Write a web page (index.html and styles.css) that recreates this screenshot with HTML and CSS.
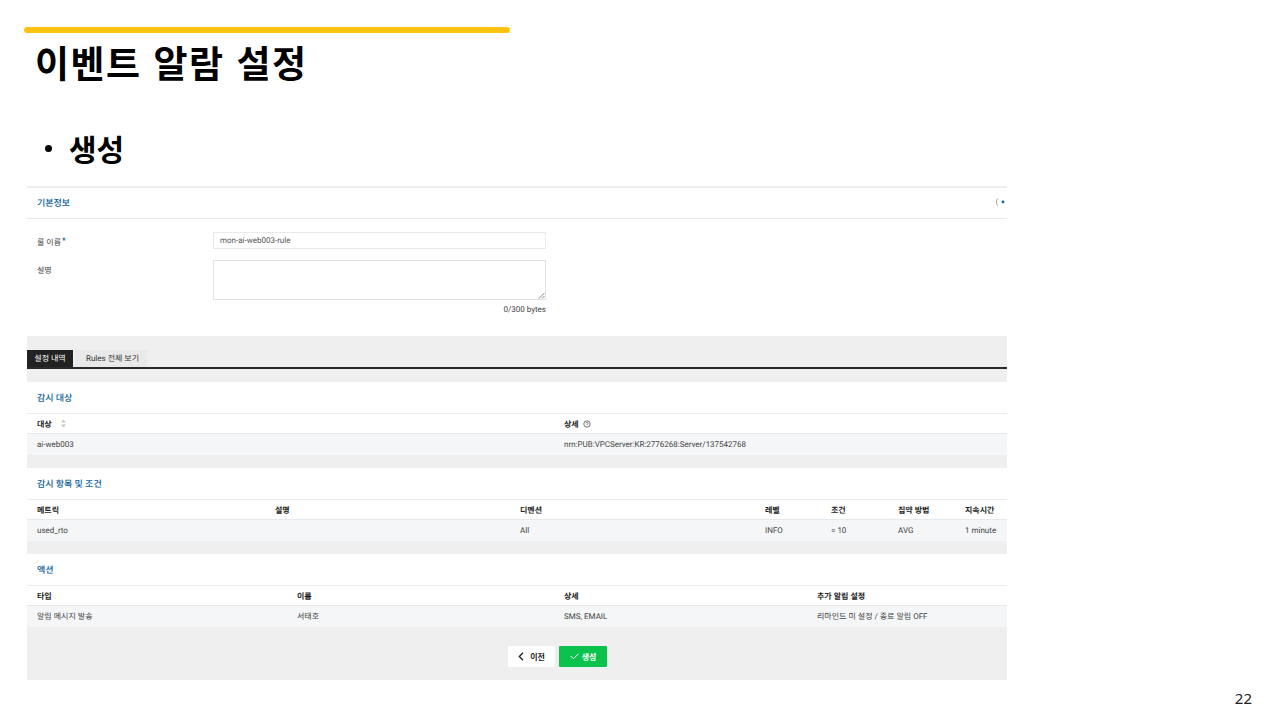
FILE: index.html

```html
<!DOCTYPE html>
<html lang="ko">
<head>
<meta charset="UTF-8" />
<title>이벤트 알람 설정</title>
<link rel="stylesheet" href="styles.css">
</head>
<body>
<div class="slide">
  <div class="accent-bar"></div>
  <h1 class="slide-title">이벤트 알람 설정</h1>
  <ul class="bullets">
    <li>생성</li>
  </ul>

  <main class="console">
    <section class="basic-info">
      <div class="basic-head">
        <h2 class="section-title">기본정보</h2>
        <svg class="spinner" width="10" height="10" viewBox="0 0 10 10" aria-hidden="true">
          <path d="M2.6 1.5 C1 3.6 1 6.4 2.6 8.5" fill="none" stroke="#9aa5ad" stroke-width="1" />
          <circle cx="8" cy="5" r="1.4" fill="#0a6aa1" />
        </svg>
      </div>
      <div class="form">
        <div class="form-row">
          <label class="form-label">룰 이름<span class="required">*</span></label>
          <div class="text-input">mon-ai-web003-rule</div>
        </div>
        <div class="form-row form-row-desc">
          <label class="form-label">설명</label>
          <div class="text-area">
            <svg class="resize-grip" width="7" height="7" viewBox="0 0 7 7" aria-hidden="true">
              <path d="M1 6.5 L6.5 1 M4 6.5 L6.5 4" stroke="#666" stroke-width="0.8" />
            </svg>
          </div>
        </div>
        <div class="byte-count">0/300 bytes</div>
      </div>
    </section>

    <div class="tabs">
      <div class="tab tab-active">설정 내역</div>
      <div class="tab tab-rules">Rules 전체 보기</div>
    </div>

    <section class="card">
      <h2 class="section-title card-title">감시 대상</h2>
      <div class="grid-row grid-head cols-target">
        <div>대상
          <svg class="sort-icon" width="7" height="9" viewBox="0 0 7 9" aria-hidden="true">
            <path d="M3.5 0.5 L6 3.4 H1 Z M3.5 8.5 L6 5.6 H1 Z" fill="#c4c8cc" />
          </svg>
        </div>
        <div>상세
          <svg class="help-icon" width="8" height="8" viewBox="0 0 8 8" aria-hidden="true">
            <circle cx="4" cy="4" r="3.2" fill="none" stroke="#555" stroke-width="0.8" />
            <path d="M3 3.2 A1 1 0 1 1 4 4.3 V4.9 M4 5.6 V6.2" fill="none" stroke="#555" stroke-width="0.7" />
          </svg>
        </div>
      </div>
      <div class="grid-row grid-body cols-target">
        <div>ai-web003</div>
        <div>nrn:PUB:VPCServer:KR:2776268:Server/137542768</div>
      </div>
    </section>

    <section class="card">
      <h2 class="section-title card-title">감시 항목 및 조건</h2>
      <div class="grid-row grid-head cols-metric">
        <div>메트릭</div><div>설명</div><div>디멘션</div><div>레벨</div><div>조건</div><div>집약 방법</div><div>지속시간</div>
      </div>
      <div class="grid-row grid-body cols-metric">
        <div>used_rto</div><div></div><div>All</div><div>INFO</div><div>= 10</div><div>AVG</div><div>1 minute</div>
      </div>
    </section>

    <section class="card">
      <h2 class="section-title card-title">액션</h2>
      <div class="grid-row grid-head cols-action">
        <div>타입</div><div>이름</div><div>상세</div><div>추가 알림 설정</div>
      </div>
      <div class="grid-row grid-body cols-action">
        <div>알림 메시지 발송</div><div>서태호</div><div>SMS, EMAIL</div><div>리마인드 미 설정 / 종료 알림 OFF</div>
      </div>
    </section>

    <div class="actions">
      <button class="btn btn-prev" type="button">
        <svg width="6" height="9" viewBox="0 0 6 9" aria-hidden="true">
          <path d="M5 0.8 L1.3 4.5 L5 8.2" fill="none" stroke="#222" stroke-width="1.3" />
        </svg>
        이전
      </button>
      <button class="btn btn-create" type="button">
        <svg width="9" height="7" viewBox="0 0 9 7" aria-hidden="true">
          <path d="M0.7 3 L3.4 5.8 L8.4 0.8" fill="none" stroke="#fff" stroke-width="1" />
        </svg>
        생성
      </button>
    </div>
  </main>

  <footer class="page-number">22</footer>
</div>
</body>
</html>
```

FILE: styles.css

```css
/* Reset and base */
* {
  box-sizing: border-box;
  margin: 0;
  padding: 0;
}
body {
  background: #fff;
  color: #000;
  font-family: Roboto, "Noto Sans CJK KR", sans-serif;
}
.slide {
  width: 1280px;
  height: 720px;
  padding-top: 27px;
  display: flex;
  flex-direction: column;
  overflow: hidden;
}

/* Slide heading */
.accent-bar {
  width: 486px;
  height: 6px;
  margin-left: 24px;
  background: #ffc20e;
  border-radius: 3px;
}
.slide-title {
  height: 60px;
  margin-left: 35px;
  font-family: "Noto Sans CJK KR", sans-serif;
  font-size: 37px;
  font-weight: 700;
  line-height: 58px;
  letter-spacing: 1.5px;
}
.bullets {
  height: 93px;
  padding-top: 34px;
  margin-left: 45px;
  list-style: none;
}
.bullets li {
  display: flex;
  align-items: center;
  gap: 17px;
  font-family: "Noto Sans CJK KR", sans-serif;
  font-size: 30px;
  font-weight: 700;
  line-height: 42px;
}
.bullets li::before {
  content: "";
  width: 7px;
  height: 7px;
  border-radius: 50%;
  background: #000;
}

/* Console panel */
.console {
  width: 980px;
  margin-left: 27px;
  background: #efefef;
  font-size: 8px;
  color: #333;
  text-rendering: geometricPrecision;
}
.section-title {
  font-size: 9px;
  font-weight: 500;
  color: #0a6096;
}
.basic-info {
  height: 150px;
  background: #fff;
  border-top: 2px solid #eee;
}
.basic-head {
  height: 31px;
  padding: 0 2px 2px 10px;
  display: flex;
  align-items: center;
  justify-content: space-between;
  border-bottom: 1px solid #e8e8e8;
}
.form {
  padding-top: 13px;
}
.form-row {
  display: flex;
}
.form-row-desc {
  margin-top: 11px;
}
.form-row-desc .form-label {
  padding-top: 5px;
}
.form-label {
  width: 186px;
  padding: 4px 0 0 10px;
  font-size: 8px;
  color: #444;
}
.required {
  color: #0a5c8f;
  font-size: 8px;
  font-weight: 700;
  vertical-align: 2px;
  margin-left: 1px;
}
.text-input {
  width: 333px;
  height: 17px;
  padding-left: 6px;
  border: 1px solid #e9e9e9;
  font-size: 8px;
  line-height: 15px;
  color: #555;
}
.text-area {
  width: 333px;
  height: 40px;
  border: 1px solid #e3e3e3;
  display: flex;
  align-items: flex-end;
  justify-content: flex-end;
}
.resize-grip {
  display: block;
}
.byte-count {
  width: 519px;
  margin-top: 5px;
  text-align: right;
  font-size: 8px;
  color: #444;
}

/* Tabs */
.tabs {
  height: 33px;
  margin-bottom: 13px;
  padding-top: 14px;
  display: flex;
  gap: 2px;
  border-bottom: 2px solid #2b2b2b;
}
.tab {
  height: 17px;
  background: #e9e9e9;
  font-size: 8px;
  line-height: 17px;
  color: #333;
}
.tab-rules {
  width: 72px;
  padding-left: 11px;
}
.tab-active {
  width: 46px;
  background: #222;
  color: #fff;
  text-align: center;
}

/* Detail cards */
.card {
  margin-bottom: 13px;
  background: #fff;
}
.card-title {
  height: 32px;
  padding-left: 10px;
  padding-top: 2px;
  line-height: 30px;
  border-bottom: 1px solid #ebebeb;
}
.grid-row {
  height: 21px;
  padding-left: 10px;
  display: grid;
  align-items: center;
}
.grid-head {
  height: 20px;
  padding-top: 1px;
  border-bottom: 1px solid #e6e9eb;
  font-weight: 700;
  color: #222;
}
.grid-body {
  background: #f4f6f7;
  color: #444;
}
.cols-target {
  grid-template-columns: 527px 1fr;
}
.cols-metric {
  grid-template-columns: 238px 245px 245px 66px 67px 67px 1fr;
}
.cols-action {
  grid-template-columns: 260px 267px 253px 1fr;
}
.sort-icon {
  margin-left: 6px;
  vertical-align: -1px;
}
.help-icon {
  margin-left: 2px;
  vertical-align: -1px;
}

/* Footer buttons */
.actions {
  height: 53px;
  margin-top: -13px;
  padding: 19px 0 0 81px;
  display: flex;
  justify-content: center;
  gap: 4px;
}
.btn {
  height: 21px;
  border: none;
  border-radius: 1px;
  font-family: inherit;
  font-size: 8px;
  font-weight: 700;
  display: flex;
  align-items: center;
  justify-content: center;
  gap: 6px;
}
.btn-prev {
  width: 47px;
  background: #fff;
  color: #222;
}
.btn-create {
  width: 48px;
  background: #0ac24c;
  color: #fff;
  gap: 3px;
}

.page-number {
  margin-top: auto;
  padding: 0 28px 13px 0;
  text-align: right;
  font-family: "Noto Sans", sans-serif;
  font-size: 15px;
  line-height: 18px;
  color: #222;
}
```
